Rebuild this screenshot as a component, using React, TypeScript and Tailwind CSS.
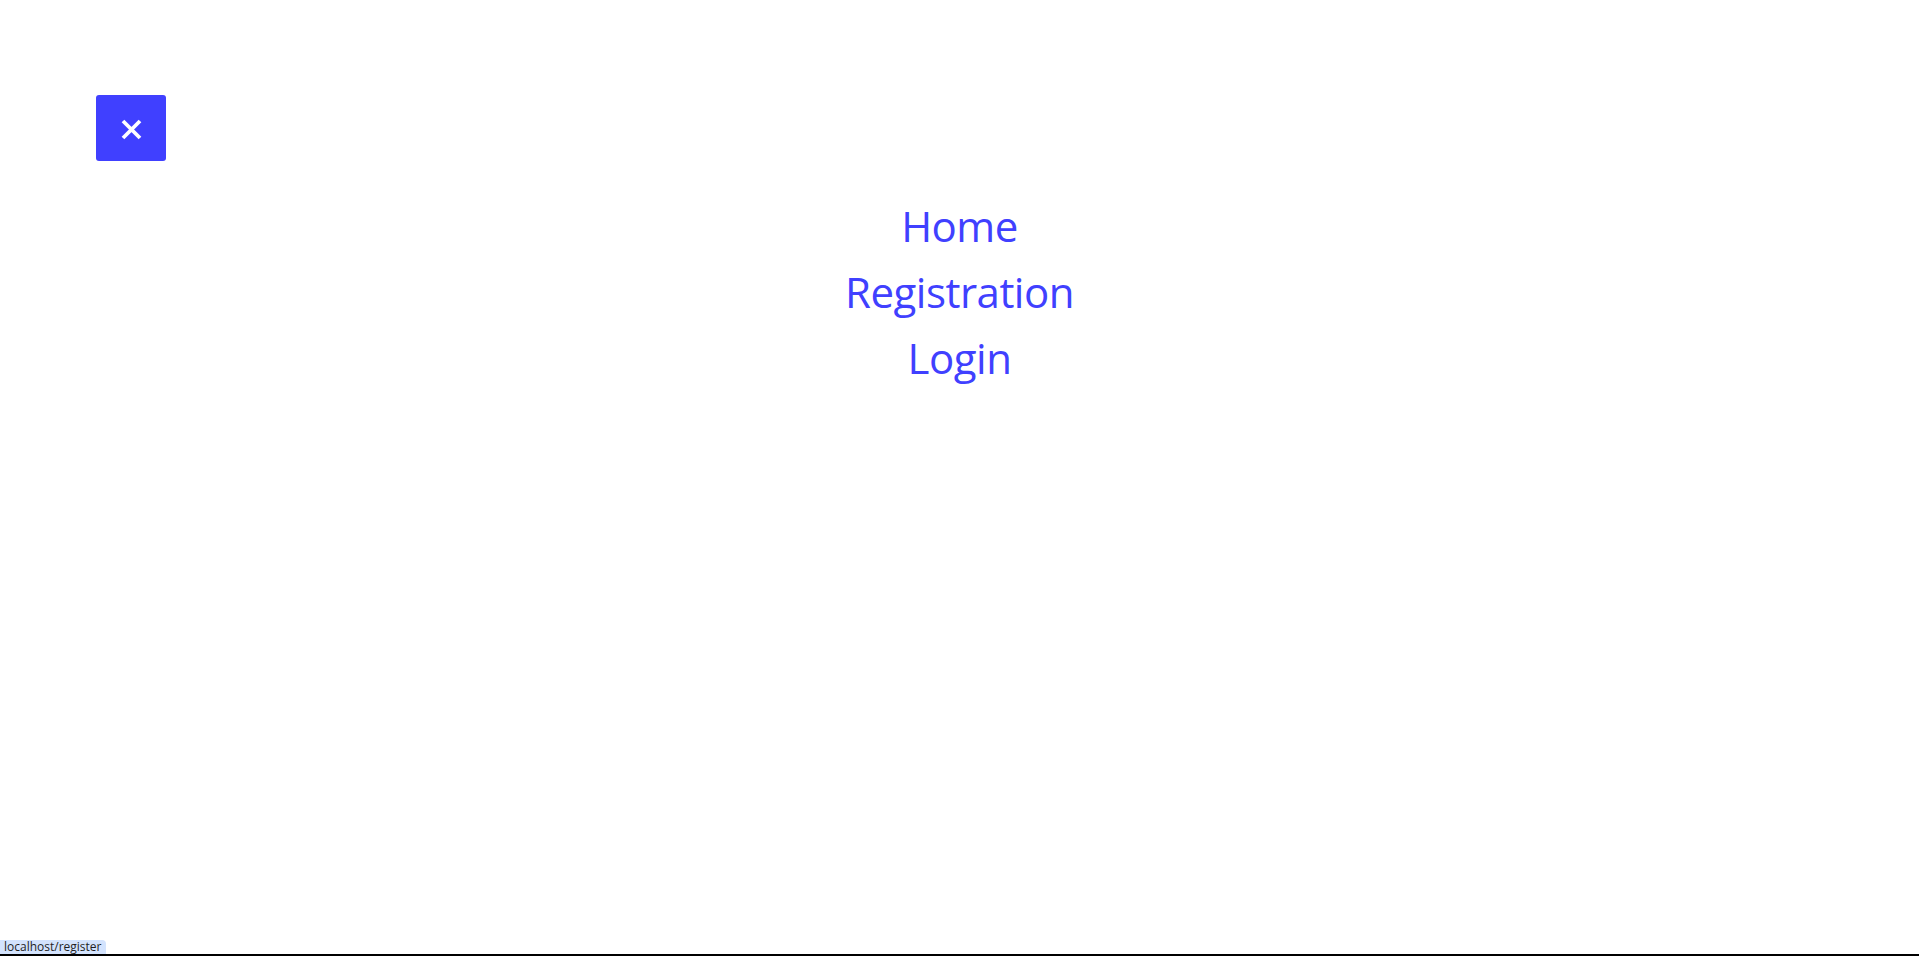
import { useState } from 'react';

const links = [
  { label: 'Home', href: '/' },
  { label: 'Registration', href: '/register' },
  { label: 'Login', href: '/login' },
];

export default function App() {
  const [open, setOpen] = useState(true);

  return (
    <div className="relative min-h-[957px] bg-white font-['Segoe_UI','Open_Sans','Noto_Sans',sans-serif]">
      <div className="pt-[95px] pl-[96px]">
        <button
          onClick={() => setOpen(!open)}
          className="w-[70px] h-[66px] pt-[2px] bg-[#4040ff] rounded-[3px] flex items-center justify-center"
        >
          <svg width="23" height="21" viewBox="0 0 23 21" fill="none">
            <path d="M3 2 L20 19 M20 2 L3 19" stroke="white" strokeWidth="3.8" strokeLinecap="butt" />
          </svg>
        </button>
      </div>

      {open && (
        <nav className="mt-[32px] flex flex-col items-center">
          {links.map((l) => (
            <a
              key={l.label}
              href={l.href}
              className="text-[#4040ff] text-[42px] leading-[66px] tracking-[-0.5px] hover:underline"
            >
              {l.label}
            </a>
          ))}
        </nav>
      )}

      {/* browser status bubble */}
      <div className="absolute left-0 top-[940px] h-[14px] px-[4px] bg-[#d3e3fd] rounded-tr-[4px] text-[12px] leading-[14px] text-[#1f1f1f]">
        localhost/register
      </div>
      <div className="absolute left-0 right-0 top-[954px] h-[2px] bg-black" />
    </div>
  );
}
